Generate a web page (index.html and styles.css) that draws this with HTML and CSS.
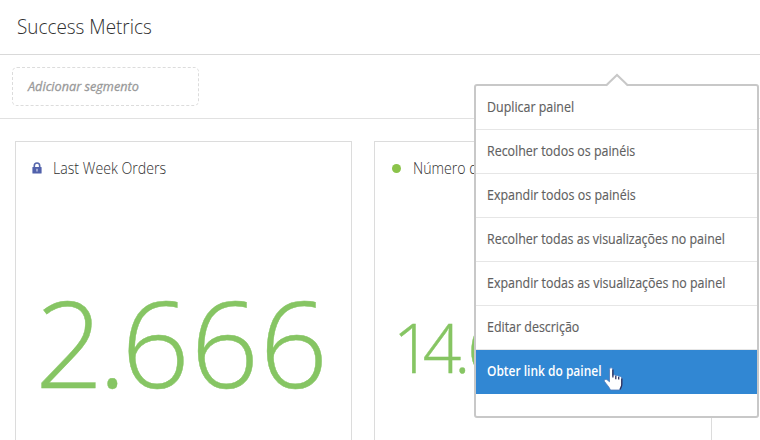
FILE: index.html
```html
<!DOCTYPE html>
<html lang="pt-BR">
<head>
<meta charset="utf-8">
<title>Success Metrics</title>
<link rel="stylesheet" href="styles.css">
</head>
<body>
<div class="page">
  <header class="header"><h1 class="title">Success Metrics</h1></header>
  <div class="segments"><div class="dropzone"><span class="hint">Adicionar segmento</span></div></div>
  <main class="cards">
    <section class="card">
      <div class="card-head">
        <svg class="lock" viewBox="0 0 10 12"><path d="M2.3 6V3.7a2.7 2.7 0 0 1 5.4 0V6" fill="none" stroke="#5566aa" stroke-width="1.6"/><rect x=".4" y="5" width="9.2" height="6.5" rx=".6" fill="#5161ab"/><path d="M5 6.8v2.8" stroke="#c9cee8" stroke-width="1.3"/></svg>
        <h2 class="card-title">Last Week Orders</h2>
      </div>
      <div class="number">2<span class="point">.</span>666</div>
    </section>
    <section class="card">
      <div class="card-head">
        <span class="dot"></span>
        <h2 class="card-title">Número d</h2>
      </div>
      <div class="number small"><span class="one">1</span>4<span class="point">.</span>6</div>
    </section>
  </main>
  <nav class="menu">
    <svg class="arrow" viewBox="0 0 24 14"><path d="M1 14 12 2 23 14Z" fill="#fff"/><path d="M1 12.5 12 2 23 12.5" fill="none" stroke="#c8c8c8" stroke-width="2"/></svg>
    <a class="item"><span>Duplicar painel</span></a>
    <a class="item"><span>Recolher todos os painéis</span></a>
    <a class="item"><span>Expandir todos os painéis</span></a>
    <a class="item"><span>Recolher todas as visualizações no painel</span></a>
    <a class="item"><span>Expandir todas as visualizações no painel</span></a>
    <a class="item"><span>Editar descrição</span></a>
    <a class="item active"><span>Obter link do painel</span></a>
  </nav>
  <svg class="cursor" viewBox="0 0 22 28"><path d="M6.5 3.5c0-2.2 3.2-2.2 3.2 0v6c.7-1 2.8-.8 3.1.5.8-.9 2.6-.6 2.9.6 1.2-.7 3 0 3 1.7v6.2c0 2-1.4 3.6-2 5.5H7.5C6 20.7 3.4 18.2 1.6 15.6c-1-1.6 1-3 2.5-1.8l2.4 2Z" fill="#fff" stroke="#4e78ba" stroke-width=".8"/><path d="M9.9 3.5v8M12.8 10v3.3M15.7 11v2.5M18.8 12.5v6c0 2-1.2 3.5-1.8 5" fill="none" stroke="#30325e" stroke-width="1.3"/></svg>
</div>
</body>
</html>
```

FILE: styles.css
```css
* { box-sizing: border-box; }
body { margin: 0; background: #fff; font-family: "Open Sans", sans-serif; color: #4b4b4b; }
h1, h2 { margin: 0; font-weight: 300; white-space: nowrap; }
.page { position: relative; width: 760px; height: 440px; overflow: hidden; }
.header { height: 55px; padding: 11px 0 0 17px; border-bottom: 1px solid #d9d9d9; }
.title { display: inline-block; transform: scaleX(.9); transform-origin: left; font-size: 21px; line-height: 30px; color: #303030; }
.segments { height: 64px; padding: 12px; border-bottom: 1px solid #e1e1e1; }
.dropzone { width: 187px; height: 39px; border: 1px dashed #dcdcdc; border-radius: 5px; padding-left: 15px; line-height: 34px; }
.hint { display: inline-block; transform: scaleX(.975); transform-origin: left; font-size: 13px; font-style: italic; color: #999; -webkit-text-stroke: .3px #999; }
.cards { display: flex; gap: 22px; padding: 22px 0 0 15px; }
.card { width: 337px; height: 340px; border: 1px solid #dcdcdc; flex: none; }
.card + .card { width: 338px; }
.card-head { display: flex; align-items: center; height: 54px; padding-left: 16px; }
.lock { width: 10px; height: 12px; margin: -2px 11px 0 0; }
.dot { width: 9px; height: 9px; border-radius: 50%; background: #8bc34a; margin: -2px 12px 0 1px; }
.card-title { transform: scaleX(.885); transform-origin: left; font-size: 16px; color: #303030; margin-top: -2px; }
.number { font-size: 120px; letter-spacing: .6px; line-height: 160px; font-weight: 300; color: #86c563; margin: 66px 0 0 19px; white-space: nowrap; -webkit-text-stroke: .4px #86c563; }
.point { margin: 0 -.05em; }
.one { margin-right: -.12em; }
.number.small { font-size: 67.5px; margin: 71px 0 0 18px; letter-spacing: -.8px; }
.small .point { margin: 0 -.035em 0 -.09em; }
.menu { position: absolute; left: 474px; top: 84px; width: 285px; height: 334px; border: 2px solid #c8c8c8; border-radius: 3px; background: #fff; }
.arrow { position: absolute; left: 129px; top: -13px; width: 24px; height: 14px; }
.item { display: flex; align-items: center; height: 44px; padding: 0 0 2px 11px; border-bottom: 1px solid #e6e6e6; font-size: 14px; color: #606060; white-space: nowrap; -webkit-text-stroke: .15px currentColor; }
.item span { transform: scaleX(.888); transform-origin: left; }
.active { background: #3187d3; color: #fff; font-weight: 600; border-bottom-color: #3187d3; -webkit-text-stroke: 0; }
.item.active span { transform: scaleX(.855); }
.cursor { position: absolute; left: 603px; top: 366px; width: 22px; height: 28px; }
```
